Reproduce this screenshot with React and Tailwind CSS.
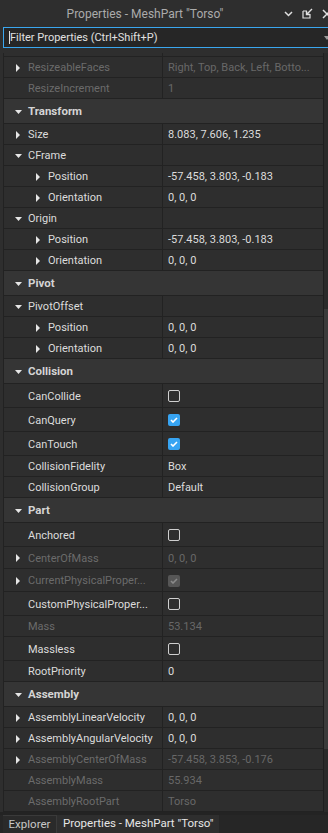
import React from "react";

const FONT = { fontFamily: "Roboto, 'Noto Sans', sans-serif" };

const rows = [
  { name: "PrimitiveType", value: "", h: 21, off: true },
  { name: "ResizeableFaces", value: "Right, Top, Back, Left, Botto...", arrow: "right", off: true },
  { name: "ResizeIncrement", value: "1", off: true },
  { header: "Transform" },
  { name: "Size", value: "8.083, 7.606, 1.235", arrow: "right" },
  { name: "CFrame", arrow: "down" },
  { name: "Position", value: "-57.458, 3.803, -0.183", arrow: "right", depth: 1 },
  { name: "Orientation", value: "0, 0, 0", arrow: "right", depth: 1 },
  { name: "Origin", arrow: "down" },
  { name: "Position", value: "-57.458, 3.803, -0.183", arrow: "right", depth: 1 },
  { name: "Orientation", value: "0, 0, 0", arrow: "right", depth: 1 },
  { header: "Pivot" },
  { name: "PivotOffset", arrow: "down" },
  { name: "Position", value: "0, 0, 0", arrow: "right", depth: 1 },
  { name: "Orientation", value: "0, 0, 0", arrow: "right", depth: 1 },
  { header: "Collision" },
  { name: "CanCollide", check: false },
  { name: "CanQuery", check: true },
  { name: "CanTouch", check: true },
  { name: "CollisionFidelity", value: "Box" },
  { name: "CollisionGroup", value: "Default" },
  { header: "Part" },
  { name: "Anchored", check: false },
  { name: "CenterOfMass", value: "0, 0, 0", arrow: "right", off: true, h: 22 },
  { name: "CurrentPhysicalProper...", arrow: "right", off: true, check: true, h: 23 },
  { name: "CustomPhysicalProper...", check: false },
  { name: "Mass", value: "53.134", off: true },
  { name: "Massless", check: false },
  { name: "RootPriority", value: "0" },
  { header: "Assembly" },
  { name: "AssemblyLinearVelocity", value: "0, 0, 0", arrow: "right" },
  { name: "AssemblyAngularVelocity", value: "0, 0, 0", arrow: "right" },
  { name: "AssemblyCenterOfMass", value: "-57.458, 3.853, -0.176", arrow: "right", off: true },
  { name: "AssemblyMass", value: "55.934", off: true },
  { name: "AssemblyRootPart", value: "Torso", off: true },
];

function Arrow({ dir }) {
  if (dir === "down") {
    return (
      <svg width="7" height="4" viewBox="0 0 7 4" className="block">
        <polygon points="0,0 7,0 3.5,4" fill="#e6e6e6" />
      </svg>
    );
  }
  return (
    <svg width="4" height="8" viewBox="0 0 4 8" className="block">
      <polygon points="0,0 4,4 0,8" fill="#e6e6e6" />
    </svg>
  );
}

function Check({ on, off }) {
  if (on && off) {
    return (
      <div className="w-[12px] h-[12px] rounded-[2px] bg-[#565656] flex items-center justify-center">
        <svg width="8" height="6" viewBox="0 0 8 6">
          <path d="M1 3 L3 5 L7 1" stroke="#8a8a8a" strokeWidth="1.6" fill="none" />
        </svg>
      </div>
    );
  }
  if (on) {
    return (
      <div className="w-[12px] h-[12px] rounded-[2px] bg-[#37a4f2] flex items-center justify-center">
        <svg width="8" height="6" viewBox="0 0 8 6">
          <path d="M1 3 L3 5 L7 1" stroke="#ffffff" strokeWidth="1.6" fill="none" />
        </svg>
      </div>
    );
  }
  return <div className="w-[12px] h-[12px] rounded-[2px] border border-[#cfcfcf]" />;
}

function Row({ r }) {
  if (r.header) {
    return (
      <div className="h-[25px] flex items-center bg-[#353535] border-b border-[#222222] pt-[1px]">
        <div className="w-[24px] flex justify-center pl-[4px]">
          <Arrow dir="down" />
        </div>
        <span className="font-bold text-[#d4d4d4] text-[11.5px]">{r.header}</span>
      </div>
    );
  }
  const h = r.h || (r.check !== undefined ? 24 : 21);
  const depth = r.depth || 0;
  return (
    <div
      className="flex border-b border-[#222222] bg-[#2e2e2e]"
      style={{ height: h }}
    >
      <div className="w-[159px] shrink-0 flex items-center border-r border-[#222222] overflow-hidden pt-[1px]">
        <div style={{ width: depth * 20 }} className="shrink-0" />
        <div className="w-[24px] shrink-0 flex justify-center pl-[4px]">
          {r.arrow && <Arrow dir={r.arrow} />}
        </div>
        <span className={r.off ? "text-[#6b6b6b] whitespace-nowrap" : "text-[#dcdcdc] whitespace-nowrap"}>
          {r.name}
        </span>
      </div>
      <div className="flex-1 flex items-center pl-[5px] overflow-hidden pt-[1px]">
        {r.check !== undefined ? (
          <Check on={r.check} off={r.off} />
        ) : (
          <span className={r.off ? "text-[#686868] whitespace-nowrap" : "text-[#dcdcdc] whitespace-nowrap"}>
            {r.value}
          </span>
        )}
      </div>
    </div>
  );
}

export default function App() {
  return (
    <div
      className="w-[328px] h-[833px] bg-[#2e2e2e] flex flex-col overflow-hidden text-[11px] leading-none"
      style={FONT}
    >
      {/* title bar */}
      <div className="h-[27px] shrink-0 flex items-center bg-[#2e2e2e]">
        <div className="flex-1 text-center text-[#ababab] text-[12px] pl-[6px]">
          Properties - MeshPart "Torso"
        </div>
        <div className="flex items-center gap-[9px] mr-[-4px]">
          <svg width="9" height="6" viewBox="0 0 9 6">
            <path d="M1 1 L4.5 4.5 L8 1" stroke="#e0e0e0" strokeWidth="1.5" fill="none" />
          </svg>
          <svg width="11" height="11" viewBox="0 0 11 11">
            <path d="M1 3 H5 M1 3 V10 H8 V6" stroke="#e0e0e0" strokeWidth="1.2" fill="none" />
            <path d="M10 1 L4.5 6.5 M4.5 3 V6.5 H8" stroke="#e0e0e0" strokeWidth="1.4" fill="none" />
          </svg>
          <svg width="10" height="10" viewBox="0 0 10 10">
            <path d="M1 1 L9 9 M9 1 L1 9" stroke="#e0e0e0" strokeWidth="1.5" />
          </svg>
        </div>
      </div>

      {/* filter */}
      <div className="h-[21px] shrink-0 ml-[3px] flex items-center border border-r-0 border-[#3aa6ee] bg-[#262626]">
        <div className="w-[1px] h-[13px] bg-[#e0e0e0] ml-[5px] shrink-0" />
        <span className="text-[#e0e0e0] flex-1 whitespace-nowrap leading-[14px]">Filter Properties (Ctrl+Shift+P)</span>
        <svg width="6" height="4" viewBox="0 0 6 4" className="mr-[-2px] shrink-0">
          <polygon points="0,0 6,0 3,4" fill="#9a9a9a" />
        </svg>
      </div>

      <div className="h-[5px] shrink-0" />

      {/* property grid */}
      <div className="flex-1 flex min-h-0 pl-[3px]">
        <div className="flex-1 overflow-hidden border-l border-[#222222]">
          <div className="mt-[-17px]">
            {rows.map((r, i) => (
              <Row key={i} r={r} />
            ))}
          </div>
        </div>
        <div className="w-[5px] shrink-0 bg-[#2a2a2a] border-l border-[#1f1f1f] flex flex-col">
          <div className="h-[256px]" />
          <div className="h-[440px] bg-[#3a3a3a]" />
        </div>
      </div>

      <div className="h-[3px] shrink-0 bg-[#232323]" />

      {/* bottom tabs */}
      <div className="h-[18px] shrink-0 flex bg-[#262626] pl-[3px] text-[11.5px]">
        <div className="w-[54px] flex items-center justify-center text-[#c8c8c8] bg-[#2a2a2a] border-t border-r border-[#3a3a3a]">
          Explorer
        </div>
        <div className="px-[6px] flex items-center text-[#e6e6e6] bg-[#2e2e2e] whitespace-nowrap">
          Properties - MeshPart "Torso"
        </div>
      </div>
    </div>
  );
}
